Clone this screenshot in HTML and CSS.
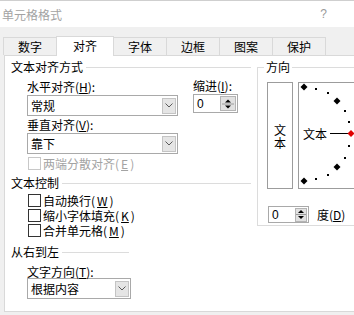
FILE: index.html
```html
<!DOCTYPE html>
<html lang="zh-CN">
<head>
    <meta charset="UTF-8">
    <meta name="viewport" content="width=device-width, initial-scale=1.0">
    <title>单元格格式</title>
    <link rel="stylesheet" href="styles.css">
</head>
<body>
<div class="dialog">
    <!-- Title bar -->
    <div class="titlebar">
        <span class="title">单元格格式</span>
        <span class="help">?</span>
    </div>

    <!-- Tabs -->
    <div class="tabs">
        <div class="tab">数字</div>
        <div class="tab active">对齐</div>
        <div class="tab">字体</div>
        <div class="tab">边框</div>
        <div class="tab">图案</div>
        <div class="tab">保护</div>
    </div>

    <div class="panel">
        <div class="col-left">
            <div class="group-title">文本对齐方式</div>
            <div class="align-row">
                <div class="align-fields">
                    <div class="field-label first">水平对齐(<u>H</u>):</div>
                    <div class="select">
                        <span>常规</span>
                        <span class="drop"><svg width="8" height="5" viewBox="0 0 8 5"><polyline points="0.5,0.5 4,4 7.5,0.5" fill="none" stroke="#5a5a5a" stroke-width="1"/></svg></span>
                    </div>
                    <div class="field-label">垂直对齐(<u>V</u>):</div>
                    <div class="select">
                        <span>靠下</span>
                        <span class="drop"><svg width="8" height="5" viewBox="0 0 8 5"><polyline points="0.5,0.5 4,4 7.5,0.5" fill="none" stroke="#5a5a5a" stroke-width="1"/></svg></span>
                    </div>
                </div>
                <div class="indent">
                    <div class="field-label indent-label">缩进(<u>I</u>):</div>
                    <div class="spin">
                        <span>0</span>
                        <span class="spin-btn"><svg width="14" height="14" viewBox="0 0 14 14"><polygon points="7,2.5 10,5.5 4,5.5" fill="#000"/><line x1="1" y1="7" x2="13" y2="7" stroke="#9a9a9a"/><polygon points="4,8.5 10,8.5 7,11.5" fill="#000"/></svg></span>
                    </div>
                </div>
            </div>

            <label class="check disabled"><span class="box"></span>两端分散对齐(<u>E</u>)</label>

            <div class="group-title control">文本控制</div>
            <label class="check first"><span class="box"></span>自动换行(<u>W</u>)</label>
            <label class="check"><span class="box"></span>缩小字体填充(<u>K</u>)</label>
            <label class="check"><span class="box"></span>合并单元格(<u>M</u>)</label>

            <div class="group-title short">从右到左</div>
            <div class="field-label rtl">文字方向(<u>T</u>):</div>
            <div class="select narrow">
                <span>根据内容</span>
                <span class="drop"><svg width="8" height="5" viewBox="0 0 8 5"><polyline points="0.5,0.5 4,4 7.5,0.5" fill="none" stroke="#5a5a5a" stroke-width="1"/></svg></span>
            </div>
        </div>

        <fieldset class="direction">
            <legend>方向</legend>
            <div class="orient">
                <div class="vtext"><span>文</span><span>本</span></div>
                <div class="dial">
                    <svg class="dial-marks" width="110" height="105" viewBox="0 0 110 105">
                        <g fill="#000">
                            <polygon points="5,0.5 8.5,4 5,7.5 1.5,4"/>
                            <rect x="16" y="5" width="2" height="2"/>
                            <rect x="28" y="9" width="2" height="2"/>
                            <polygon points="38,14.5 41.5,18 38,21.5 34.5,18"/>
                            <rect x="45" y="27" width="2" height="2"/>
                            <rect x="49" y="38" width="2" height="2"/>
                            <rect x="49" y="62" width="2" height="2"/>
                            <rect x="45" y="74" width="2" height="2"/>
                            <polygon points="38,80.5 41.5,84 38,87.5 34.5,84"/>
                            <rect x="28" y="91" width="2" height="2"/>
                            <rect x="16" y="95" width="2" height="2"/>
                            <polygon points="5,94.5 8.5,98 5,101.5 1.5,98"/>
                        </g>
                        <line x1="31" y1="50.5" x2="49" y2="50.5" stroke="#000"/>
                        <polygon points="52,47 55.5,50.5 52,54 48.5,50.5" fill="#e00000"/>
                    </svg>
                    <span class="dial-text">文本</span>
                </div>
            </div>
            <div class="degree">
                <div class="spin small">
                    <span>0</span>
                    <span class="spin-btn"><svg width="10" height="13" viewBox="0 0 10 13"><polygon points="5,2 8,5 2,5" fill="#000"/><line x1="0" y1="6.5" x2="10" y2="6.5" stroke="#9a9a9a"/><polygon points="2,8 8,8 5,11" fill="#000"/></svg></span>
                </div>
                <span>度(<u>D</u>)</span>
            </div>
        </fieldset>
    </div>
</div>
</body>
</html>
```

FILE: styles.css
```css
* {
    box-sizing: border-box;
}
html, body {
    margin: 0;
}
body {
    width: 354px;
    height: 315px;
    overflow: hidden;
    background: #f0f0f0;
    font-family: "Noto Sans CJK SC", sans-serif;
    font-size: 12px;
    color: #000;
}
u {
    text-decoration: underline;
}
.dialog {
    width: 354px;
}

/* title bar */
.titlebar {
    height: 27px;
    background: #fff;
    border-top: 1px solid #cfcfcf;
    display: flex;
    align-items: center;
    justify-content: space-between;
    padding: 0 27px 0 2px;
}
.title {
    color: #a3a3a3;
}
.help {
    color: #9a9a9a;
    font-family: "Liberation Sans", sans-serif;
}

/* tabs */
.tabs {
    height: 28px;
    display: flex;
    align-items: flex-end;
    padding-left: 3px;
}
.tab {
    width: 54px;
    height: 18px;
    margin-right: -1px;
    padding-top: 1px;
    border: 1px solid #d9d9d9;
    border-bottom: none;
    background: #f0f0f0;
    text-align: center;
    line-height: 16px;
}
.tab.active {
    width: 58px;
    height: 20px;
    margin-bottom: -1px;
    background: #fff;
    position: relative;
    z-index: 1;
}

/* page */
.panel {
    margin-left: 4px;
    width: 440px;
    height: 257px;
    border: 1px solid #d9d9d9;
    background: #fff;
    display: flex;
}
.col-left {
    flex: none;
    width: 252px;
    padding: 0 6px;
}
.group-title {
    display: flex;
    align-items: center;
    gap: 3px;
    height: 14px;
    line-height: 14px;
    margin-top: 4px;
}
.group-title::after {
    content: "";
    flex: 1;
    border-top: 1px solid #dcdcdc;
}
.group-title.control {
    margin-top: 5px;
}
.group-title.short {
    width: 118px;
    margin-top: 7px;
}

.align-row {
    display: flex;
    gap: 15px;
    padding-left: 16px;
}
.field-label {
    height: 14px;
    line-height: 14px;
    margin: 2px 0 1px;
}
.field-label.first {
    margin-top: 6px;
}
.field-label.indent-label {
    margin-top: 5px;
    margin-bottom: 1px;
}
.field-label.rtl {
    margin: 6px 0 0 16px;
    height: 13px;
    line-height: 13px;
}

.select {
    width: 151px;
    height: 21px;
    border: 1px solid #a9a9a9;
    background: #fff;
    display: flex;
    align-items: center;
    justify-content: space-between;
    padding: 0 1px 0 3px;
    line-height: 15px;
}
.select.narrow {
    width: 104px;
    margin-left: 16px;
}
.drop {
    width: 14px;
    height: 16px;
    background: #e5e5e5;
    border: 1px solid #c4c4c4;
    display: flex;
    align-items: center;
    justify-content: center;
}

.spin {
    width: 45px;
    height: 19px;
    border: 1px solid #a9a9a9;
    display: flex;
    align-items: center;
    justify-content: space-between;
    padding: 0 1px 0 3px;
    font-family: "Liberation Sans", sans-serif;
    line-height: 14px;
}
.spin-btn {
    width: 16px;
    height: 15px;
    background: #e1e1e1;
    border: 1px solid #b4b4b4;
    display: flex;
    align-items: center;
    justify-content: center;
}
.spin.small {
    width: 41px;
    height: 17px;
}
.spin.small .spin-btn {
    width: 12px;
    height: 14px;
}

/* checkboxes */
.check {
    display: flex;
    align-items: center;
    gap: 2px;
    height: 15px;
    line-height: 15px;
    padding-left: 17px;
}
.check.disabled {
    margin-top: 2px;
    color: #a3a3a3;
}
.check.first {
    margin-top: 3px;
}
.box {
    flex: none;
    width: 13px;
    height: 13px;
    border: 1px solid #333;
    background: #fff;
}
.check.disabled .box {
    border-color: #c8c8c8;
}

/* direction group */
.direction {
    flex: none;
    margin: 4px 0 0;
    padding: 8px 0 9px 9px;
    border: 1px solid #dcdcdc;
    width: 150px;
    height: 166px;
}
.direction legend {
    margin-left: -3px;
    padding: 0 2px;
    line-height: 14px;
}
.orient {
    display: flex;
    gap: 5px;
    height: 107px;
}
.vtext {
    width: 26px;
    border: 1px solid #9c9c9c;
    display: flex;
    flex-direction: column;
    align-items: center;
    justify-content: center;
    line-height: 13px;
}
.dial {
    position: relative;
    width: 110px;
    border: 1px solid #9c9c9c;
    display: flex;
    align-items: center;
    padding: 0 0 3px 4px;
}
.dial-marks {
    position: absolute;
    left: 0;
    top: 0;
}
.dial-text {
    position: relative;
    line-height: 14px;
}
.degree {
    display: flex;
    align-items: center;
    gap: 8px;
    margin: 17px 0 0 1px;
}
```
